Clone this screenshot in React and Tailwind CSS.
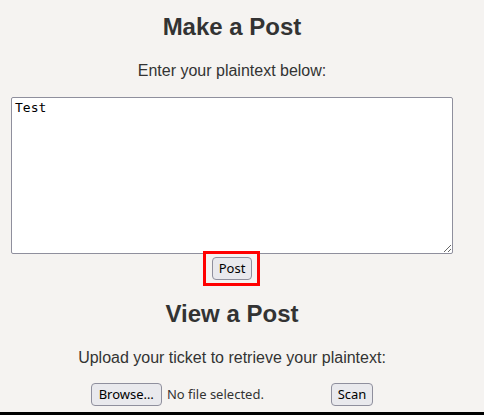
export default function App() {
  const btn =
    "rounded-[4px] border border-[#8f8f9d] bg-[#e9e9ed] px-[6px] h-[23px] leading-[21px] text-[13px] text-black font-['Noto_Sans',sans-serif]";

  return (
    <div className="flex min-h-[415px] flex-col bg-[#f5f3f1] font-['Liberation_Sans',Arial,sans-serif] text-[#333]">
      <main className="flex-1">
        <div className="ml-[11px] flex w-[442px] flex-col items-center text-center">
          <h2 className="mt-[13px] text-[24px] font-bold leading-[28px]">Make a Post</h2>
          <p className="mt-[20px] text-[16px] leading-[20px]">Enter your plaintext below:</p>
          <textarea
            defaultValue="Test"
            className="mt-[16px] block h-[157px] w-[442px] rounded-[2px] border border-[#8f8f9d] bg-white px-[3px] py-[2px] text-left font-['DejaVu_Sans_Mono',monospace] text-[13px] leading-[16px] text-black outline-none"
          />
          <div className="relative mt-[2px]">
            <button className={btn}>Post</button>
            <div className="pointer-events-none absolute -top-[5px] -bottom-[6px] -left-[9px] -right-[8px] border-[3px] border-[#ff0000]" />
          </div>
          <h2 className="mt-[20px] text-[24px] font-bold leading-[28px]">View a Post</h2>
          <p className="mt-[20px] text-[16px] leading-[20px]">Upload your ticket to retrieve your plaintext:</p>
          <div className="mt-[15px] flex items-center">
            <div className="flex w-[236px] items-center">
              <button className={`${btn} px-[7px]`}>Browse…</button>
              <span className="ml-[5px] text-[13px] text-[#333] font-['Noto_Sans',sans-serif]">No file selected.</span>
            </div>
            <button className={`${btn} ml-[4px] h-[22px] leading-[20px]`}>Scan</button>
          </div>
        </div>
      </main>
      <div className="h-[3px] bg-black" />
    </div>
  );
}
